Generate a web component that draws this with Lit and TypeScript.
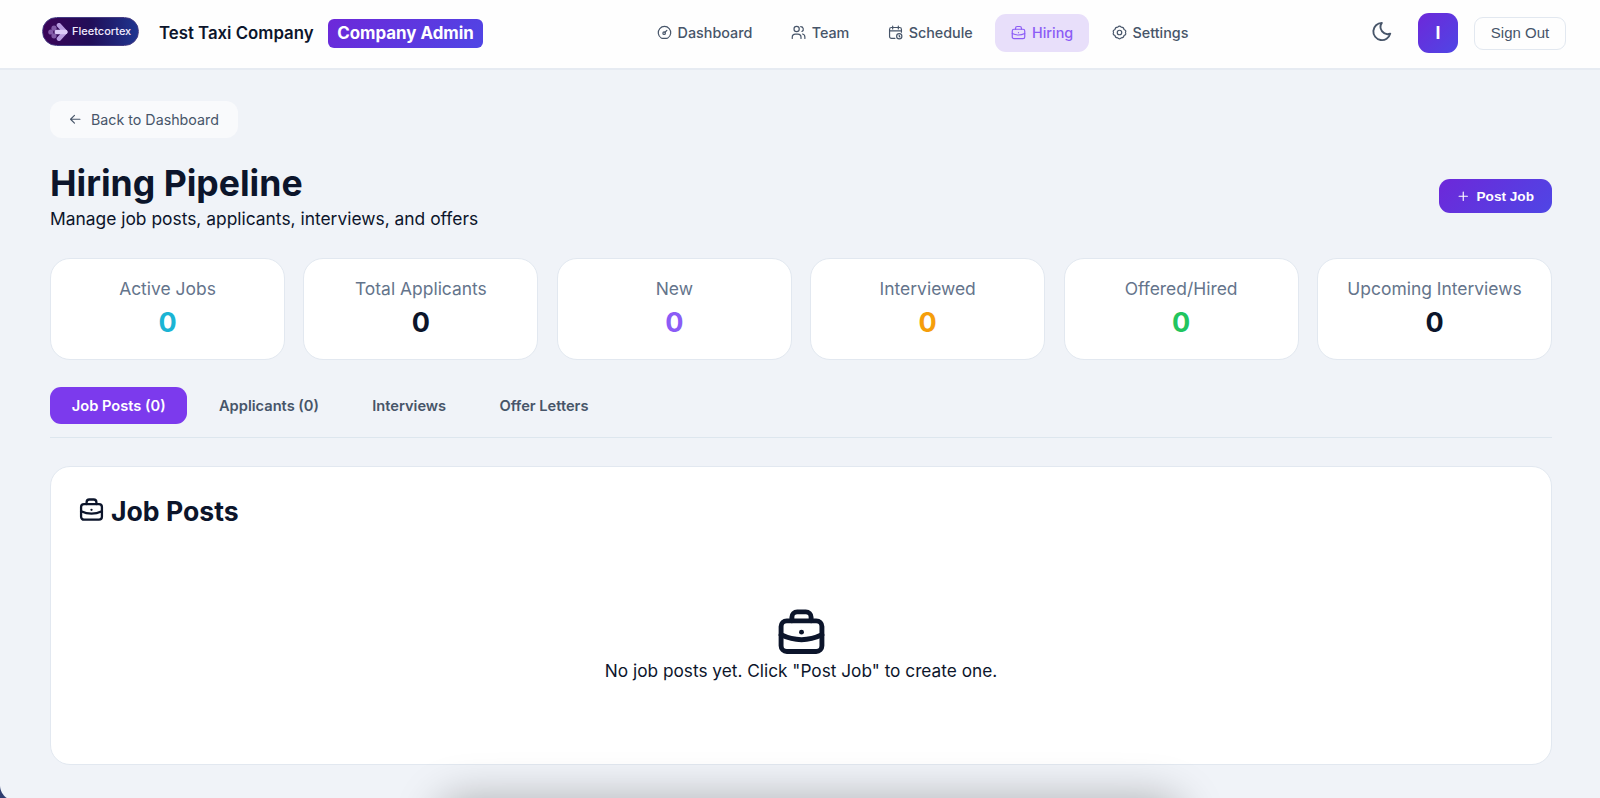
/**
 * `<app-root>` — the hiring pipeline page: top bar, stat cards, tabs and the
 * job posts panel in its empty state.
 */

import { css, html, LitElement, svg, type TemplateResult } from "lit";
import { customElement, property, state } from "lit/decorators.js";
import { classMap } from "lit/directives/class-map.js";

type IconName =
  | "dashboard"
  | "team"
  | "schedule"
  | "briefcase"
  | "settings"
  | "moon"
  | "back"
  | "plus";

/** Stroke shapes on a 24×24 grid. */
const ICONS: Record<IconName, TemplateResult> = {
  dashboard: svg`
    <path d="M6.5 20.6A10 10 0 1 1 17.5 20.6Q16.8 21.5 15.2 21.5H8.8Q7.2 21.5 6.5 20.6Z" />
    <circle cx="11.4" cy="13" r="2" />
    <path d="M12.8 11.6L15.8 8.5" />
  `,
  team: svg`
    <circle cx="9" cy="6.5" r="4.2" />
    <path d="M15.5 2.5a4.2 4.2 0 0 1 2 7.9" />
    <path d="M2 21.5v-1.8a5 5 0 0 1 5-5h4a5 5 0 0 1 5 5v1.8" />
    <path d="M18.5 14.4a5 5 0 0 1 3.7 4.8v2.3" />
  `,
  schedule: svg`
    <path d="M11 21.5H5.5a3 3 0 0 1-3-3V7a3 3 0 0 1 3-3h13a3 3 0 0 1 3 3v4.5" />
    <path d="M7.5 1.8v4.4M16.5 1.8v4.4M2.5 9.5h19" />
    <circle cx="18" cy="18" r="4.2" />
    <path d="M18 16.4V18l.9.8" />
  `,
  briefcase: svg`
    <rect x="2" y="6.8" width="20" height="15" rx="2.8" />
    <path d="M7.3 6.8V5a2.6 2.6 0 0 1 2.6-2.6h4.2A2.6 2.6 0 0 1 16.7 5v1.8" />
    <path d="M2 13.6Q12 18.4 22 13.6" />
    <path d="M12 12.3v.01" />
  `,
  settings: svg`
    <path
      d="M9.2 3.4Q12 0.4 14.8 3.4Q18.9 3.3 19.2 7.2Q23.4 9 21.5 12Q23.4 15 19.2 16.8Q18.9 20.7 14.8 20.6Q12 23.6 9.2 20.6Q5.1 20.7 4.8 16.8Q0.6 15 2.5 12Q0.6 9 4.8 7.2Q5.1 3.3 9.2 3.4Z"
    />
    <circle cx="12" cy="12" r="3.6" />
  `,
  moon: svg`<path d="M21.5 14.1A9.6 9.6 0 1 1 12.1 2.1A8 8 0 0 0 21.5 14.1Z" />`,
  back: svg`<path d="M21 12H4M10.5 4.5L3 12L10.5 19.5" />`,
  plus: svg`<path d="M12 2.5v19M2.5 12h19" />`,
};

/** Single-colour line icon; sized through `--icon-size`. */
@customElement("fc-icon")
export class FcIcon extends LitElement {
  @property() name: IconName = "briefcase";

  protected override render() {
    return html`<svg viewBox="0 0 24 24" aria-hidden="true">${ICONS[this.name]}</svg>`;
  }

  static override styles = css`
    :host {
      display: block;
      flex: none;
      width: var(--icon-size, 15px);
      height: var(--icon-size, 15px);
    }

    svg {
      display: block;
      width: 100%;
      height: 100%;
      overflow: visible;
      fill: none;
      stroke: currentColor;
      stroke-width: var(--icon-stroke, 1.9);
      stroke-linecap: round;
      stroke-linejoin: round;
    }
  `;
}

/** Fleetcortex pill logo. */
@customElement("fc-logo")
export class FcLogo extends LitElement {
  protected override render() {
    return html`
      <svg viewBox="0 0 20 18" aria-hidden="true">
        <g class="dots">
          <circle cx="2.8" cy="9" r="2.6" />
          <circle cx="6" cy="5.2" r="2.6" />
          <circle cx="6" cy="12.8" r="2.6" />
        </g>
        <path class="soft" d="M11 2.3L17.2 9L11 15.7" />
        <path class="bright" d="M8.8 9H17.3" />
      </svg>
      <span>Fleetcortex</span>
    `;
  }

  static override styles = css`
    :host {
      box-sizing: border-box;
      display: flex;
      align-items: center;
      gap: 4px;
      width: 97px;
      height: 29px;
      padding-left: 5px;
      border: 1px solid #443b83;
      border-radius: 15px;
      background: linear-gradient(90deg, #3b0458, #210e58 50%, #1f3590);
      color: #f1eafd;
      font: 500 11px/1 Inter, sans-serif;
    }

    svg {
      width: 20px;
      height: 18px;
      fill: none;
      stroke-width: 4.6;
      stroke-linecap: round;
      stroke-linejoin: round;
    }

    .dots {
      fill: #9670bd;
      opacity: 0.8;
    }

    .soft {
      stroke: #b89be0;
    }

    .bright {
      stroke: #dccbf8;
    }
  `;
}

const NAV: { label: string; icon: IconName }[] = [
  { label: "Dashboard", icon: "dashboard" },
  { label: "Team", icon: "team" },
  { label: "Schedule", icon: "schedule" },
  { label: "Hiring", icon: "briefcase" },
  { label: "Settings", icon: "settings" },
];

const STATS = [
  { label: "Active Jobs", value: 0, tone: "cyan" },
  { label: "Total Applicants", value: 0, tone: "ink" },
  { label: "New", value: 0, tone: "violet" },
  { label: "Interviewed", value: 0, tone: "amber" },
  { label: "Offered/Hired", value: 0, tone: "green" },
  { label: "Upcoming Interviews", value: 0, tone: "ink" },
];

const TABS = ["Job Posts (0)", "Applicants (0)", "Interviews", "Offer Letters"];

@customElement("app-root")
export class AppRoot extends LitElement {
  @state() private page = "Hiring";

  @state() private tab = 0;

  private renderHeader() {
    return html`
      <header>
        <div class="brand">
          <fc-logo></fc-logo>
          <span class="company">Test Taxi Company</span>
          <span class="role">Company Admin</span>
        </div>
        <nav>
          ${NAV.map(
            ({ label, icon }) => html`
              <a
                class=${classMap({ link: true, current: label === this.page })}
                @click=${() => (this.page = label)}
              >
                <fc-icon name=${icon}></fc-icon>${label}
              </a>
            `,
          )}
        </nav>
        <div class="account">
          <button class="theme" aria-label="Toggle theme"><fc-icon name="moon"></fc-icon></button>
          <span class="avatar">I</span>
          <button class="sign-out">Sign Out</button>
        </div>
      </header>
    `;
  }

  protected override render() {
    return html`
      ${this.renderHeader()}
      <main>
        <a class="back"><fc-icon name="back"></fc-icon>Back to Dashboard</a>
        <div class="title-row">
          <div>
            <h1>Hiring Pipeline</h1>
            <p class="subtitle">Manage job posts, applicants, interviews, and offers</p>
          </div>
          <button class="post-job"><fc-icon name="plus"></fc-icon>Post Job</button>
        </div>
        <section class="stats">
          ${STATS.map(
            ({ label, value, tone }) => html`
              <div class="stat">
                <span class="stat-label">${label}</span>
                <span class="stat-value ${tone}">${value}</span>
              </div>
            `,
          )}
        </section>
        <div class="tabs" role="tablist">
          ${TABS.map(
            (label, i) => html`
              <button
                class=${classMap({ tab: true, selected: i === this.tab })}
                role="tab"
                @click=${() => (this.tab = i)}
              >
                ${label}
              </button>
            `,
          )}
        </div>
        <section class="panel">
          <h2><fc-icon name="briefcase"></fc-icon>Job Posts</h2>
          <div class="empty">
            <fc-icon name="briefcase"></fc-icon>
            <p>No job posts yet. Click "Post Job" to create one.</p>
          </div>
        </section>
      </main>
      <div class="dock"></div>
    `;
  }

  static override styles = css`
    :host {
      --ink: #0c152b;
      --slate: #475569;
      --line: #e2e8f0;
      --brand: linear-gradient(135deg, #6d28d9, #4f46e5);
      position: relative;
      display: block;
      height: 100vh;
      overflow: hidden;
      background: radial-gradient(circle at 16px 0, #f0f3f8 15.5px, #303d70 16.5px)
          left bottom / 16px 13px no-repeat,
        #f0f3f8;
      color: var(--ink);
      font-family: Inter, "Noto Sans", sans-serif;
    }

    h1,
    h2,
    p {
      margin: 0;
    }

    button {
      margin: 0;
      border: none;
      background: none;
      font-family: inherit;
    }

    header {
      box-sizing: border-box;
      display: flex;
      align-items: center;
      justify-content: space-between;
      height: 70px;
      padding: 0 34px 3px 42px;
      border-bottom: 2px solid #e6ebf2;
      background: #fefefe;
    }

    .brand {
      display: flex;
      align-items: center;
    }

    fc-logo {
      margin: 0 20px 2px 0;
    }

    .company {
      width: 155px;
      margin: 1px 14px 0 0;
      font-size: 16.8px;
      font-weight: 600;
      white-space: nowrap;
    }

    .role {
      box-sizing: border-box;
      width: 155px;
      margin-top: 2px;
      border-radius: 6px;
      background: var(--brand);
      color: #fff;
      font-size: 16.9px;
      font-weight: 700;
      line-height: 29px;
      text-align: center;
      white-space: nowrap;
    }

    nav {
      display: flex;
      gap: 6.3px;
    }

    .link {
      display: flex;
      align-items: center;
      gap: 6px;
      height: 38px;
      padding: 0 16px;
      border-radius: 11px;
      color: var(--slate);
      font-size: 14.35px;
      font-weight: 500;
    }

    .link.current {
      background: #e8dffa;
      color: #8b5cf6;
    }

    .account {
      display: flex;
      align-items: center;
      gap: 16px;
    }

    .theme {
      display: grid;
      place-items: center;
      width: 40px;
      height: 40px;
      padding: 0 0 2px;
      color: var(--slate);
      --icon-size: 21.5px;
      --icon-stroke: 2.1;
    }

    .avatar {
      width: 40px;
      border-radius: 11px;
      background: var(--brand);
      color: #fff;
      font-size: 17.5px;
      font-weight: 700;
      line-height: 40px;
      text-align: center;
    }

    .sign-out {
      box-sizing: border-box;
      width: 92px;
      height: 33px;
      margin-top: 1px;
      padding: 0 0 1px;
      border: 1px solid var(--line);
      border-radius: 9px;
      color: var(--slate);
      font: 15px "Liberation Sans", sans-serif;
    }

    main {
      padding: 31px 48px 0 50px;
    }

    .back {
      box-sizing: border-box;
      display: flex;
      align-items: center;
      gap: 9.5px;
      width: 188px;
      height: 37px;
      padding-left: 19px;
      border-radius: 12px;
      background: #f9fafc;
      color: var(--slate);
      font-size: 14.25px;
      --icon-size: 12.5px;
      --icon-stroke: 2.2;
    }

    .title-row {
      display: flex;
      align-items: flex-start;
      justify-content: space-between;
      height: 120px;
    }

    h1 {
      padding-top: 25px;
      font-size: 35.6px;
      font-weight: 700;
      line-height: 42px;
    }

    .subtitle {
      font-size: 17.4px;
      line-height: 28px;
    }

    .post-job {
      display: flex;
      align-items: center;
      justify-content: center;
      gap: 8px;
      width: 113px;
      height: 34px;
      margin-top: 41px;
      padding: 0 0 0 1px;
      border-radius: 11px;
      background: var(--brand);
      color: #fff;
      font: 700 13.6px "Liberation Sans", sans-serif;
      --icon-size: 10.5px;
      --icon-stroke: 2.6;
    }

    .stats {
      display: grid;
      grid-template-columns: repeat(6, 1fr);
      gap: 18.4px;
    }

    .stat {
      box-sizing: border-box;
      display: flex;
      flex-direction: column;
      align-items: center;
      height: 102px;
      padding-top: 15px;
      border: 1px solid var(--line);
      border-radius: 20px;
      background: #fff;
    }

    .stat-label {
      color: #64748b;
      font-size: 17.45px;
      line-height: 30px;
    }

    .stat-value {
      font-size: 27px;
      font-weight: 700;
      line-height: 38px;
    }

    .cyan {
      color: #1bb4d4;
    }

    .violet {
      color: #8b5cf6;
    }

    .amber {
      color: #f59e0b;
    }

    .green {
      color: #22c55e;
    }

    .tabs {
      display: flex;
      gap: 9.7px;
      padding: 27px 0 13px;
      border-bottom: 1px solid #dde6ee;
    }

    .tab {
      height: 37px;
      padding: 0 21.8px;
      border-radius: 11px;
      color: var(--slate);
      font-size: 14.65px;
      font-weight: 600;
    }

    .tab.selected {
      background: #7c3aed;
      color: #fff;
    }

    .panel {
      box-sizing: border-box;
      height: 299px;
      margin-top: 27.5px;
      padding: 28px;
      border: 1px solid var(--line);
      border-radius: 20px;
      background: #fff;
    }

    h2 {
      display: flex;
      align-items: center;
      gap: 7px;
      font-size: 26.6px;
      font-weight: 700;
      line-height: 32px;
      --icon-size: 25px;
      --icon-stroke: 2.2;
    }

    h2 fc-icon {
      margin-bottom: 3px;
    }

    .empty {
      display: flex;
      flex-direction: column;
      align-items: center;
      gap: 1px;
      padding-top: 80px;
      font-size: 17.25px;
      line-height: 28px;
      --icon-size: 49px;
      --icon-stroke: 2.4;
    }

    /* Only the shadow of the off-screen dock reaches into the page. */
    .dock {
      position: absolute;
      top: 100%;
      left: 438px;
      width: 744px;
      height: 80px;
      border-radius: 24px;
      box-shadow: 0 0 44px rgba(0, 0, 0, 0.28);
    }
  `;
}
